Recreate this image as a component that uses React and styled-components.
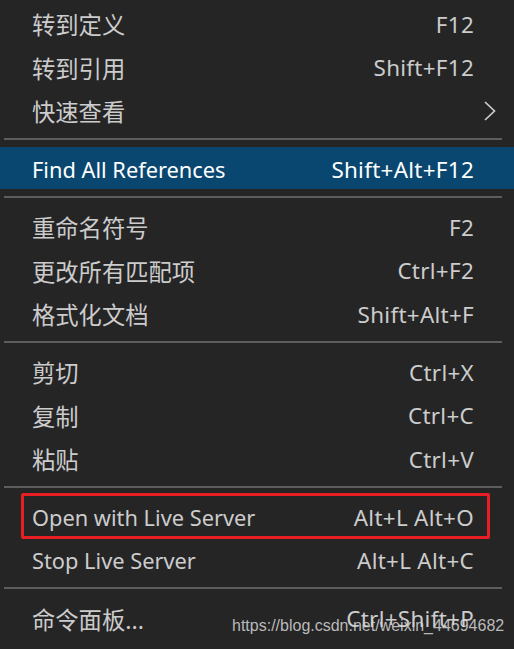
import React from 'react';
import styled, { createGlobalStyle, css } from 'styled-components';

const Global = createGlobalStyle`
  html, body { margin: 0; padding: 0; background: #252526; }
  body { width: 514px; height: 649px; overflow: hidden; }
`;

const Menu = styled.ul`
  list-style: none;
  margin: 0;
  padding: 1px 0 0;
  width: 514px;
  height: 649px;
  box-sizing: border-box;
  background: #252526;
  display: flex;
  flex-direction: column;
  position: relative;
  font-family: "Noto Sans", "Noto Sans CJK SC", sans-serif;
  overflow: hidden;
`;

const Item = styled.li`
  position: relative;
  flex: none;
  height: 42px;
  margin: 0.75px 0;
  display: flex;
  align-items: center;
  padding: 3px 18px 0 32px;
  box-sizing: border-box;
  background: ${p => (p.$active ? '#094771' : 'transparent')};
  color: ${p => (p.$active ? '#ffffff' : '#cccccc')};
  ${p =>
    p.$marked &&
    css`
      &::after {
        content: '';
        position: absolute;
        left: 21px;
        right: 24px;
        top: -1.5px;
        bottom: -2.5px;
        border: 3px solid #e81e25;
        border-radius: 2px;
        pointer-events: none;
      }
    `}
`;

const Label = styled.span`
  flex: 1;
  white-space: nowrap;
  font-size: ${p => (p.$cjk ? '23.3px' : '21.8px')};
`;

const Shortcut = styled.span`
  white-space: nowrap;
  font-size: 22.4px;
  letter-spacing: 0.3px;
  margin-right: 22px;
`;

const Chevron = styled.svg`
  width: 14px;
  height: 20px;
  margin-right: -1px;
  flex: none;
`;

const Separator = styled.li`
  flex: none;
  height: 14.5px;
  display: flex;
  align-items: center;
  padding: 0 12px 0 4px;
  &::before {
    content: '';
    flex: 1;
    height: 2px;
    background: #5d5d5d;
  }
`;

const Watermark = styled.div`
  position: absolute;
  left: 232px;
  top: 617px;
  font-family: "Liberation Sans", Arial, sans-serif;
  font-size: 16px;
  color: rgba(215, 215, 215, 0.85);
  white-space: nowrap;
  pointer-events: none;
`;

const groups = [
  [
    { label: '转到定义', cjk: true, key: 'F12' },
    { label: '转到引用', cjk: true, key: 'Shift+F12' },
    { label: '快速查看', cjk: true, sub: true },
  ],
  [{ label: 'Find All References', key: 'Shift+Alt+F12', active: true }],
  [
    { label: '重命名符号', cjk: true, key: 'F2' },
    { label: '更改所有匹配项', cjk: true, key: 'Ctrl+F2' },
    { label: '格式化文档', cjk: true, key: 'Shift+Alt+F' },
  ],
  [
    { label: '剪切', cjk: true, key: 'Ctrl+X' },
    { label: '复制', cjk: true, key: 'Ctrl+C' },
    { label: '粘贴', cjk: true, key: 'Ctrl+V' },
  ],
  [
    { label: 'Open with Live Server', key: 'Alt+L Alt+O', marked: true },
    { label: 'Stop Live Server', key: 'Alt+L Alt+C' },
  ],
  [{ label: '命令面板...', cjk: true, key: 'Ctrl+Shift+P' }],
];

export default function App() {
  return (
    <>
      <Global />
      <Menu>
        {groups.map((g, gi) => (
          <React.Fragment key={gi}>
            {gi > 0 && <Separator />}
            {g.map(it => (
              <Item key={it.label} $active={it.active} $marked={it.marked}>
                <Label $cjk={it.cjk}>{it.label}</Label>
                {it.key && <Shortcut>{it.key}</Shortcut>}
                {it.sub && (
                  <Chevron viewBox="0 0 14 20">
                    <path d="M2 1 L11.5 10 L2 19" fill="none" stroke="#cccccc" strokeWidth="1.7" />
                  </Chevron>
                )}
              </Item>
            ))}
          </React.Fragment>
        ))}
        <Watermark>https://blog.csdn.net/weixin_44694682</Watermark>
      </Menu>
    </>
  );
}
